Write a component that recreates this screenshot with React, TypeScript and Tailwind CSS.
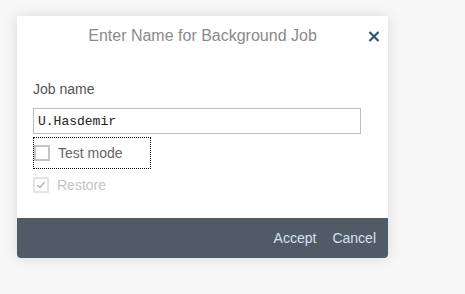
export default function App() {
  return (
    <div className="h-[294px] w-[465px] bg-[#f7f7f7] pl-[17px] pt-[16px] font-['Liberation_Sans',Arial,sans-serif]">
      <div className="flex w-[371px] flex-col rounded-b-[4px] bg-white shadow-[0_0_14px_rgba(0,0,0,0.12)]">
        <div className="relative flex h-[40px] items-center justify-center">
          <span className="text-[16px] text-[#8a8a8a]">Enter Name for Background Job</span>
          <button className="absolute right-[6px] top-[12px] flex h-[16px] w-[16px] items-center justify-center">
            <svg width="12" height="11" viewBox="0 0 12 11">
              <path d="M1.5 1 L10.5 10 M10.5 1 L1.5 10" stroke="#2d5477" strokeWidth="2.2" />
            </svg>
          </button>
        </div>
        <div className="flex flex-col px-[16px] pt-[25px] pb-[25px]">
          <label className="text-[14px] leading-[16px] text-[#555]">Job name</label>
          <input
            readOnly
            value="U.Hasdemir"
            className="mt-[11px] h-[26px] w-[328px] border border-[#bdbdbd] px-[4px] font-['Liberation_Mono',monospace] text-[13px] text-[#222] outline-none"
          />
          <div className="mt-[3px] flex h-[32px] w-[118px] items-center gap-[8px] border border-dotted border-black">
            <span className="h-[16px] w-[16px] border-2 border-[#c4c4c4] bg-white" />
            <span className="text-[14px] leading-[16px] text-[#666]">Test mode</span>
          </div>
          <div className="mt-[8px] flex h-[16px] items-center gap-[8px]">
            <span className="flex h-[16px] w-[16px] items-center justify-center border-2 border-[#e4e4e4] bg-white">
              <svg width="10" height="10" viewBox="0 0 10 10">
                <path d="M1.5 5 L4 7.5 L8.5 2" fill="none" stroke="#9db6cf" strokeWidth="1.3" />
              </svg>
            </span>
            <span className="text-[14px] leading-[16px] text-[#c4c4c4]">Restore</span>
          </div>
        </div>
        <div className="flex h-[40px] items-center justify-end gap-[16px] rounded-b-[4px] bg-[#515b66] pr-[12px] text-[14px] text-[#d5e3ef]">
          <span>Accept</span>
          <span>Cancel</span>
        </div>
      </div>
    </div>
  );
}
